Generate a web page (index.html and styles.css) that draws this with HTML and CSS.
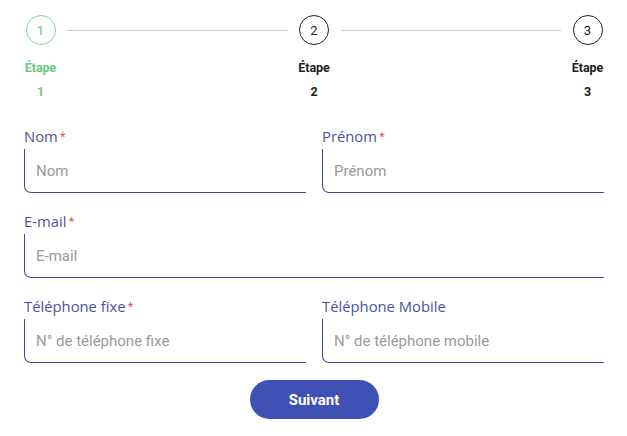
FILE: index.html
```html
<!DOCTYPE html>
<html lang="fr">
<head>
    <meta charset="UTF-8">
    <meta name="viewport" content="width=device-width, initial-scale=1.0">
    <title>Inscription - Étape 1</title>
    <link rel="stylesheet" href="styles.css">
</head>
<body>

    <!-- Stepper -->
    <div class="stepper">
        <div class="step active">
            <div class="step-circle">1</div>
            <div class="step-label">Étape<br>1</div>
        </div>
        <div class="step-line"></div>
        <div class="step">
            <div class="step-circle">2</div>
            <div class="step-label">Étape<br>2</div>
        </div>
        <div class="step-line"></div>
        <div class="step">
            <div class="step-circle">3</div>
            <div class="step-label">Étape<br>3</div>
        </div>
    </div>

    <!-- Form -->
    <form class="form">
        <div class="form-row">
            <div class="field">
                <label class="field-label">Nom<span class="required">*</span></label>
                <input class="field-input" type="text" placeholder="Nom">
            </div>
            <div class="field">
                <label class="field-label">Prénom<span class="required">*</span></label>
                <input class="field-input" type="text" placeholder="Prénom">
            </div>
        </div>
        <div class="form-row single">
            <div class="field">
                <label class="field-label">E-mail<span class="required">*</span></label>
                <input class="field-input" type="email" placeholder="E-mail">
            </div>
        </div>
        <div class="form-row">
            <div class="field">
                <label class="field-label">Téléphone fixe<span class="required">*</span></label>
                <input class="field-input" type="tel" placeholder="N° de téléphone fixe">
            </div>
            <div class="field">
                <label class="field-label">Téléphone Mobile</label>
                <input class="field-input" type="tel" placeholder="N° de téléphone mobile">
            </div>
        </div>
        <div class="actions">
            <button class="btn-next" type="button">Suivant</button>
        </div>
    </form>

</body>
</html>
```

FILE: styles.css
```css
body {
    margin: 0;
    padding: 15px 23px 0 24px;
    font-family: Roboto, "Liberation Sans", sans-serif;
    background: #fff;
    color: #212121;
}

/* Stepper */
.stepper {
    display: flex;
    align-items: flex-start;
}
.step {
    width: 33px;
    display: flex;
    flex-direction: column;
    align-items: center;
}
.step-circle {
    width: 28px;
    height: 28px;
    border: 1px solid #222;
    border-radius: 50%;
    display: flex;
    align-items: center;
    justify-content: center;
    font-size: 13px;
}
.step-label {
    margin-top: 11px;
    font-size: 12.5px;
    font-weight: bold;
    line-height: 24px;
    text-align: center;
}
.step.active .step-circle {
    border-color: #86d394;
    color: #6cc97a;
}
.step.active .step-label {
    color: #6cc97a;
}
.step-line {
    flex: 1;
    height: 1px;
    background: #cfcfcf;
    margin: 15px 10px 0 10px;
}

/* Form */
.form {
    margin-top: 22px;
    display: flex;
    flex-direction: column;
    gap: 18px;
}
.form-row {
    display: grid;
    grid-template-columns: 1fr 1fr;
    gap: 16px;
}
.form-row.single {
    grid-template-columns: 1fr;
}
.field {
    display: flex;
    flex-direction: column;
    gap: 3px;
}
.field-label {
    font-family: "Open Sans", sans-serif;
    font-size: 14.8px;
    line-height: 20px;
    color: #4a54a0;
}
.required {
    color: #e53935;
    font-size: 11px;
    vertical-align: top;
    margin-left: 2px;
}
.field-input {
    height: 44px;
    box-sizing: border-box;
    border: none;
    border-left: 1px solid #3e4a96;
    border-bottom: 1px solid #3e4a96;
    border-bottom-left-radius: 7px;
    padding: 0 11px;
    font-family: Roboto, sans-serif;
    font-size: 15px;
    outline: none;
    background: transparent;
}
.field-input::placeholder {
    color: #9a9a9a;
}

.actions {
    display: flex;
    justify-content: center;
    margin-top: -1px;
}
.btn-next {
    width: 129px;
    height: 39px;
    border: none;
    border-radius: 20px;
    background: #3f51b5;
    color: #fff;
    font-family: Roboto, sans-serif;
    font-size: 15px;
    font-weight: bold;
    cursor: pointer;
}
```
